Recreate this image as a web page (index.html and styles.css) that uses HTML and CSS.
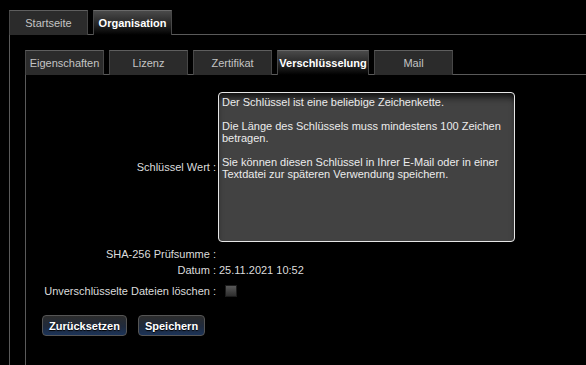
FILE: index.html
```html
<!DOCTYPE html>
<html>

<head>
    <title>Organisation - Verschlüsselung</title>
    <link rel="stylesheet" href="styles.css">
</head>

<body>

    <div id="main">
        <div class="tab-bar">
            <div class="tab">Startseite</div>
            <div class="tab active">Organisation</div>
        </div>
        <div id="main-panel">
            <div class="tab-bar">
                <div class="tab sub">Eigenschaften</div>
                <div class="tab sub">Lizenz</div>
                <div class="tab sub">Zertifikat</div>
                <div class="tab sub active">Verschlüsselung</div>
                <div class="tab sub">Mail</div>
            </div>
            <div id="sub-panel">
                <div class="row row-key">
                    <div class="label">Schlüssel Wert :</div>
                    <textarea class="key-field" readonly>Der Schlüssel ist eine beliebige Zeichenkette.

Die Länge des Schlüssels muss mindestens 100 Zeichen betragen.

Sie können diesen Schlüssel in Ihrer E-Mail oder in einer Textdatei zur späteren Verwendung speichern.</textarea>
                </div>
                <div class="row">
                    <div class="label">SHA-256 Prüfsumme :</div>
                    <div class="value"></div>
                </div>
                <div class="row">
                    <div class="label">Datum :</div>
                    <div class="value">25.11.2021 10:52</div>
                </div>
                <div class="row row-check">
                    <div class="label">Unverschlüsselte Dateien löschen :</div>
                    <input type="checkbox" class="check">
                </div>
                <div id="btn-container">
                    <button class="btn">Zurücksetzen</button>
                    <button class="btn">Speichern</button>
                </div>
            </div>
        </div>
    </div>

</body>

</html>
```

FILE: styles.css
```css
body {
    margin: 0;
    background-color: #000;
    font-family: "Liberation Sans", Arial, sans-serif;
    font-size: 11px;
    color: #dcdcdc;
}

#main {
    margin-left: 9px;
    padding-top: 10px;
}

.tab-bar {
    display: flex;
    gap: 5px;
    border-bottom: 1px solid #5a5a5a;
}

.tab {
    width: 77px;
    height: 23px;
    line-height: 25px;
    text-align: center;
    color: #c4c4c4;
    background-color: #2b2b2b;
    border: 1px solid #474747;
    border-bottom: none;
    border-top-color: #5e5e5e;
    margin-bottom: -1px;
    padding-bottom: 1px;
    white-space: nowrap;
}

.tab.sub {
    width: auto;
    min-width: 77px;
}

.tab.active {
    color: #fff;
    font-weight: bold;
    background: linear-gradient(#4a4a4a, #1a1a1a 70%, #000);
    border-top-color: #6a6a6a;
}

.tab.sub.active {
    width: 90px;
    min-width: 0;
}

#main-panel {
    border-left: 1px solid #5a5a5a;
    padding: 15px 0 0 15px;
    min-height: 315px;
}

#sub-panel {
    border-left: 1px solid #5a5a5a;
    padding-top: 17px;
    min-height: 273px;
}

.row {
    display: flex;
    align-items: center;
    height: 16px;
}

.row-key {
    height: 150px;
    margin-bottom: 4px;
}

.row-check {
    height: 26px;
}

.label {
    width: 190px;
    text-align: right;
    margin-right: 2px;
    white-space: nowrap;
}

.value {
    padding-left: 1px;
}

.key-field {
    width: 297px;
    height: 150px;
    box-sizing: border-box;
    margin: 0;
    padding: 3px 3px;
    border: 1px solid #e6e6e6;
    border-radius: 4px;
    background-color: #424242;
    box-shadow: inset 0 7px 7px -3px rgba(0, 0, 0, 0.8);
    color: #ececec;
    font-family: "Liberation Sans", Arial, sans-serif;
    font-size: 11px;
    line-height: 12px;
    resize: none;
    overflow: hidden;
}

.check {
    appearance: none;
    width: 12px;
    height: 12px;
    margin: 0 0 0 7px;
    border: 1px solid #1c1c1c;
    background: linear-gradient(#585858, #2e2e2e);
}

#btn-container {
    display: flex;
    gap: 11px;
    margin: 11px 0 0 16px;
}

.btn {
    height: 21px;
    padding: 0 6px;
    border: 1px solid #555;
    border-radius: 4px;
    background: linear-gradient(#2c2c2c, #1f2a3c 55%, #1b3358);
    color: #fff;
    font-family: "Liberation Sans", Arial, sans-serif;
    font-size: 11px;
    font-weight: bold;
    text-shadow: 0 1px 1px #000;
}
```
